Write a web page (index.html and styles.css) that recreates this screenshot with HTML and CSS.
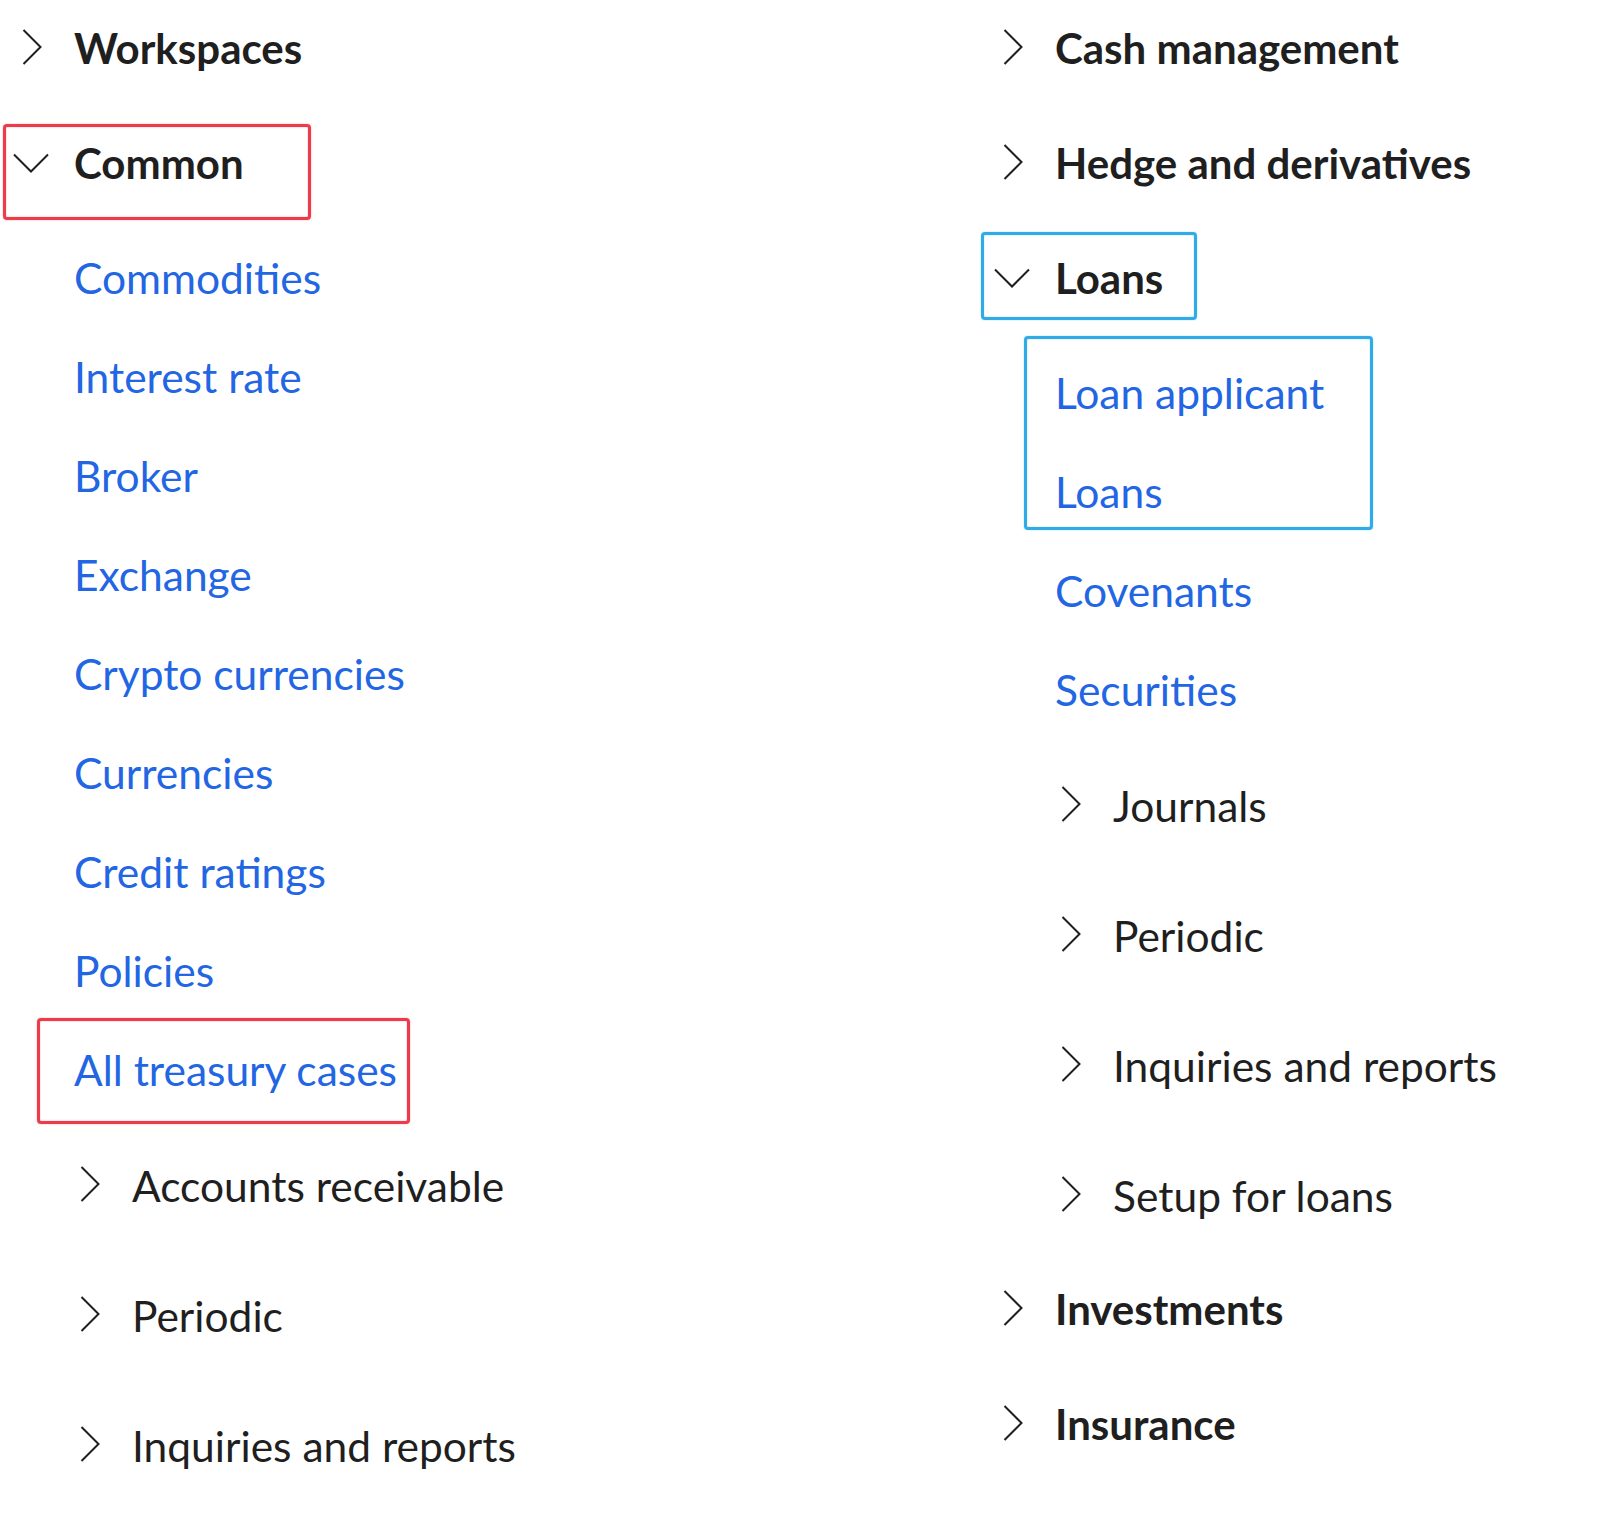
FILE: index.html
```html
<!DOCTYPE html>
<html lang="en">
<head>
<meta charset="utf-8">
<title>Treasury navigation</title>
<link rel="stylesheet" href="styles.css">
</head>
<body>
<div class="page">
  <div class="col">
    <div class="row row-group">
      <span class="icon icon-right"><svg width="20" height="36" viewBox="0 0 20 36"><path d="M1.5 1 L18.5 18 L1.5 35" /></svg></span>
      <span class="label">Workspaces</span>
    </div>
    <div class="row row-group">
      <span class="mark mark-red mark-common"></span>
      <span class="icon icon-down"><svg width="36" height="20" viewBox="0 0 36 20"><path d="M1 1.5 L18 18.5 L35 1.5" /></svg></span>
      <span class="label">Common</span>
    </div>
    <div class="row row-link"><a class="link">Commodities</a></div>
    <div class="row row-link"><a class="link">Interest rate</a></div>
    <div class="row row-link"><a class="link">Broker</a></div>
    <div class="row row-link"><a class="link">Exchange</a></div>
    <div class="row row-link"><a class="link">Crypto currencies</a></div>
    <div class="row row-link"><a class="link">Currencies</a></div>
    <div class="row row-link"><a class="link">Credit ratings</a></div>
    <div class="row row-link"><a class="link">Policies</a></div>
    <div class="row row-link">
      <span class="mark mark-red mark-cases"></span>
      <a class="link">All treasury cases</a>
    </div>
    <div class="row row-sub">
      <span class="icon icon-sub"><svg width="20" height="36" viewBox="0 0 20 36"><path d="M1.5 1 L18.5 18 L1.5 35" /></svg></span>
      <span class="label">Accounts receivable</span>
    </div>
    <div class="row row-sub">
      <span class="icon icon-sub"><svg width="20" height="36" viewBox="0 0 20 36"><path d="M1.5 1 L18.5 18 L1.5 35" /></svg></span>
      <span class="label">Periodic</span>
    </div>
    <div class="row row-sub">
      <span class="icon icon-sub"><svg width="20" height="36" viewBox="0 0 20 36"><path d="M1.5 1 L18.5 18 L1.5 35" /></svg></span>
      <span class="label">Inquiries and reports</span>
    </div>
  </div>

  <div class="col">
    <div class="row row-group">
      <span class="icon icon-right"><svg width="20" height="36" viewBox="0 0 20 36"><path d="M1.5 1 L18.5 18 L1.5 35" /></svg></span>
      <span class="label">Cash management</span>
    </div>
    <div class="row row-group">
      <span class="icon icon-right"><svg width="20" height="36" viewBox="0 0 20 36"><path d="M1.5 1 L18.5 18 L1.5 35" /></svg></span>
      <span class="label">Hedge and derivatives</span>
    </div>
    <div class="row row-group">
      <span class="mark mark-blue mark-loans"></span>
      <span class="icon icon-down"><svg width="36" height="20" viewBox="0 0 36 20"><path d="M1 1.5 L18 18.5 L35 1.5" /></svg></span>
      <span class="label">Loans</span>
    </div>
    <div class="group">
      <span class="mark mark-blue mark-loanlinks"></span>
      <div class="row row-link"><a class="link">Loan applicant</a></div>
      <div class="row row-link"><a class="link">Loans</a></div>
    </div>
    <div class="row row-link"><a class="link">Covenants</a></div>
    <div class="row row-link"><a class="link">Securities</a></div>
    <div class="row row-sub">
      <span class="icon icon-sub"><svg width="20" height="36" viewBox="0 0 20 36"><path d="M1.5 1 L18.5 18 L1.5 35" /></svg></span>
      <span class="label">Journals</span>
    </div>
    <div class="row row-sub">
      <span class="icon icon-sub"><svg width="20" height="36" viewBox="0 0 20 36"><path d="M1.5 1 L18.5 18 L1.5 35" /></svg></span>
      <span class="label">Periodic</span>
    </div>
    <div class="row row-sub">
      <span class="icon icon-sub"><svg width="20" height="36" viewBox="0 0 20 36"><path d="M1.5 1 L18.5 18 L1.5 35" /></svg></span>
      <span class="label">Inquiries and reports</span>
    </div>
    <div class="row row-sub">
      <span class="icon icon-sub"><svg width="20" height="36" viewBox="0 0 20 36"><path d="M1.5 1 L18.5 18 L1.5 35" /></svg></span>
      <span class="label">Setup for loans</span>
    </div>
    <div class="row row-group">
      <span class="icon icon-right"><svg width="20" height="36" viewBox="0 0 20 36"><path d="M1.5 1 L18.5 18 L1.5 35" /></svg></span>
      <span class="label">Investments</span>
    </div>
    <div class="row row-group">
      <span class="icon icon-right"><svg width="20" height="36" viewBox="0 0 20 36"><path d="M1.5 1 L18.5 18 L1.5 35" /></svg></span>
      <span class="label">Insurance</span>
    </div>
  </div>
</div>
</body>
</html>
```

FILE: styles.css
```css
html, body {
  margin: 0;
  padding: 0;
  background: #ffffff;
}

body {
  font-family: "Lato", "Open Sans", "Liberation Sans", sans-serif;
  color: #1f1f1f;
}

.page {
  display: grid;
  grid-template-columns: 981px 1fr;
  width: 1618px;
}

.col {
  display: flex;
  flex-direction: column;
}

.row {
  position: relative;
  display: flex;
  align-items: flex-start;
  box-sizing: border-box;
  font-size: 42.5px;
  line-height: 60px;
  white-space: nowrap;
}

.row-group {
  height: 115px;
  padding-top: 18px;
  font-size: 42px;
  font-weight: 700;
}

.row-link {
  height: 99px;
  padding-top: 18px;
  padding-left: 74px;
}

.row-sub {
  height: 130px;
  padding-top: 35px;
}

.link {
  color: #2266e3;
  text-decoration: none;
}

.icon {
  display: flex;
  flex: none;
  margin-top: 11px;
}

.icon svg path {
  fill: none;
  stroke: #1f1f1f;
  stroke-width: 2;
}

.icon-right {
  margin-left: 22px;
  width: 52px;
}

.icon-down {
  margin-left: 13px;
  margin-top: 20px;
  width: 61px;
}

.icon-sub {
  margin-left: 80px;
  margin-top: 10px;
  width: 52px;
}

.group {
  position: relative;
  display: flex;
  flex-direction: column;
}

.mark {
  position: absolute;
  box-sizing: border-box;
  border-radius: 4px;
  border: 3px solid;
}

.mark-red {
  border-color: #ec3c4c;
  box-shadow: 0 0 1.5px rgba(240, 90, 110, 0.7), inset 0 0 1.5px rgba(240, 90, 110, 0.7);
}

.mark-blue {
  border-color: #31abe5;
  box-shadow: 0 0 1.5px rgba(80, 180, 235, 0.7), inset 0 0 1.5px rgba(80, 180, 235, 0.7);
}

.mark-common {
  left: 3px;
  top: 9px;
  width: 308px;
  height: 96px;
}

.mark-cases {
  left: 37px;
  top: -4px;
  width: 373px;
  height: 106px;
}

.mark-loans {
  left: 0;
  top: 2px;
  width: 216px;
  height: 88px;
}

.mark-loanlinks {
  left: 43px;
  top: -9px;
  width: 349px;
  height: 194px;
}
```
